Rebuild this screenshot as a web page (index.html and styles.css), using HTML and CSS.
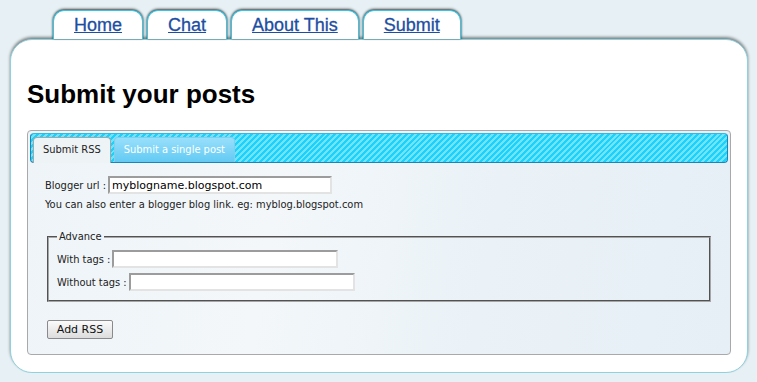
FILE: index.html
```html
<!DOCTYPE html>
<html lang="en">
<head>
  <meta charset="UTF-8" />
  <meta name="viewport" content="width=device-width, initial-scale=1.0"/>
  <title>Submit your posts</title>
  <link rel="stylesheet" href="styles.css">
</head>
<body>

  <ul class="nav">
    <li><a href="#">Home</a></li>
    <li><a href="#">Chat</a></li>
    <li><a href="#">About This</a></li>
    <li><a href="#">Submit</a></li>
  </ul>

  <div class="page">
    <h1>Submit your posts</h1>

    <div class="tabs">
      <ul class="tabs-nav">
        <li class="active"><a href="#rss">Submit RSS</a></li>
        <li><a href="#single">Submit a single post</a></li>
      </ul>

      <div class="tabs-panel" id="rss">
        <form>
          <div class="row">
            <label for="blogUrl">Blogger url :</label>
            <input type="text" id="blogUrl" class="url" value="myblogname.blogspot.com" />
          </div>
          <p class="hint">You can also enter a blogger blog link. eg: myblog.blogspot.com</p>

          <fieldset>
            <legend>Advance</legend>
            <div class="row">
              <label for="withTags">With tags :</label>
              <input type="text" id="withTags" />
            </div>
            <div class="row">
              <label for="withoutTags">Without tags :</label>
              <input type="text" id="withoutTags" />
            </div>
          </fieldset>

          <button type="submit">Add RSS</button>
        </form>
      </div>
    </div>
  </div>

</body>
</html>
```

FILE: styles.css
```css
body {
  margin: 0;
  background: #e7f0f4;
  font-family: "Liberation Sans", Arial, sans-serif;
}

/* top navigation tabs */
.nav {
  list-style: none;
  margin: 0;
  padding: 10px 0 0 53px;
  display: flex;
  gap: 4px;
}
.nav li {
  position: relative;
  z-index: 2;
  height: 29px;
  box-sizing: border-box;
  padding: 1px 20px 0;
  display: flex;
  align-items: center;
  background: #fff;
  border: 1px solid #35c6e6;
  border-bottom: none;
  border-radius: 11px 11px 0 0;
  box-shadow: 0 -2px 3px -1px rgba(0,0,0,0.6), -1px 0 2px rgba(0,0,0,0.35), 1px 0 2px rgba(0,0,0,0.35);
}
.nav a {
  color: #1d4ea2;
  font-size: 18px;
  -webkit-text-stroke: 0.3px #1d4ea2;
}

/* main white box */
.page {
  position: relative;
  z-index: 1;
  margin: 0 9px 0 10px;
  padding: 39px 16px 17px;
  background: #fff;
  border: 1px solid #8ed2de;
  border-radius: 22px;
  box-shadow: 0 -2px 3px rgba(0,0,0,0.45);
}
h1 {
  margin: 0 0 21px;
  font-size: 26px;
  line-height: 30px;
  color: #000;
}

/* tab widget */
.tabs {
  padding: 2px;
  border: 1px solid #a9a9a9;
  border-radius: 4px;
  background: linear-gradient(100deg, #eef4f8 0%, #f3f7fa 35%, #eaf2f7 65%, #e6eff6 100%);
  font-family: "DejaVu Sans Condensed", "DejaVu Sans", sans-serif;
  font-size: 11px;
}
.tabs-nav {
  list-style: none;
  margin: 0;
  padding: 3px 2px 0;
  display: flex;
  align-items: flex-start;
  gap: 3px;
  border: 1px solid #1a86b8;
  border-top-color: #3ab7df;
  border-radius: 4px;
  background: repeating-linear-gradient(135deg, #1bd3fa 0 2.1px, #72e3fc 2.1px 4.2px);
}
.tabs-nav li {
  height: 25px;
  box-sizing: border-box;
  padding: 0 9px;
  line-height: 24px;
  border: 1px solid #8ccbe6;
  border-bottom: none;
  border-radius: 4px 4px 0 0;
  background: linear-gradient(#98dffb, #62caf3);
}
.tabs-nav li a {
  color: #fff;
  text-decoration: none;
}
.tabs-nav li.active {
  height: 26px;
  margin-bottom: -1px;
  border-color: #a6a6a6;
  background: #eef3f6;
}
.tabs-nav li.active a {
  color: #222;
}

.tabs-panel {
  padding: 13px 15px 13px;
  color: #222;
}
.row {
  display: flex;
  align-items: center;
  gap: 2px;
  height: 18px;
}
input {
  width: 226px;
  height: 18px;
  box-sizing: border-box;
  padding: 0 2px;
  border: 2px solid;
  border-color: #9c9c9c #e3e3e3 #e3e3e3 #9c9c9c;
  background: #fff;
  font-family: "DejaVu Sans", Verdana, sans-serif;
  font-size: 11px;
  color: #000;
}
input.url {
  width: 224px;
}
.hint {
  margin: 4px 0 0;
  line-height: 13px;
}
fieldset {
  margin: 19px 2px 0;
  padding: 7px 8px 9px;
  border: 2px groove #a6a6a6;
  display: flex;
  flex-direction: column;
  gap: 5px;
}
legend {
  padding: 0 2px;
  line-height: 13px;
}
button {
  margin: 18px 0 0 2px;
  width: 66px;
  height: 19px;
  padding: 0;
  border: 1px solid #8a8a8a;
  border-radius: 2px;
  background: linear-gradient(#fbfbfb, #dcdcdc);
  font-family: "DejaVu Sans", Verdana, sans-serif;
  font-size: 11px;
  color: #111;
}
```
